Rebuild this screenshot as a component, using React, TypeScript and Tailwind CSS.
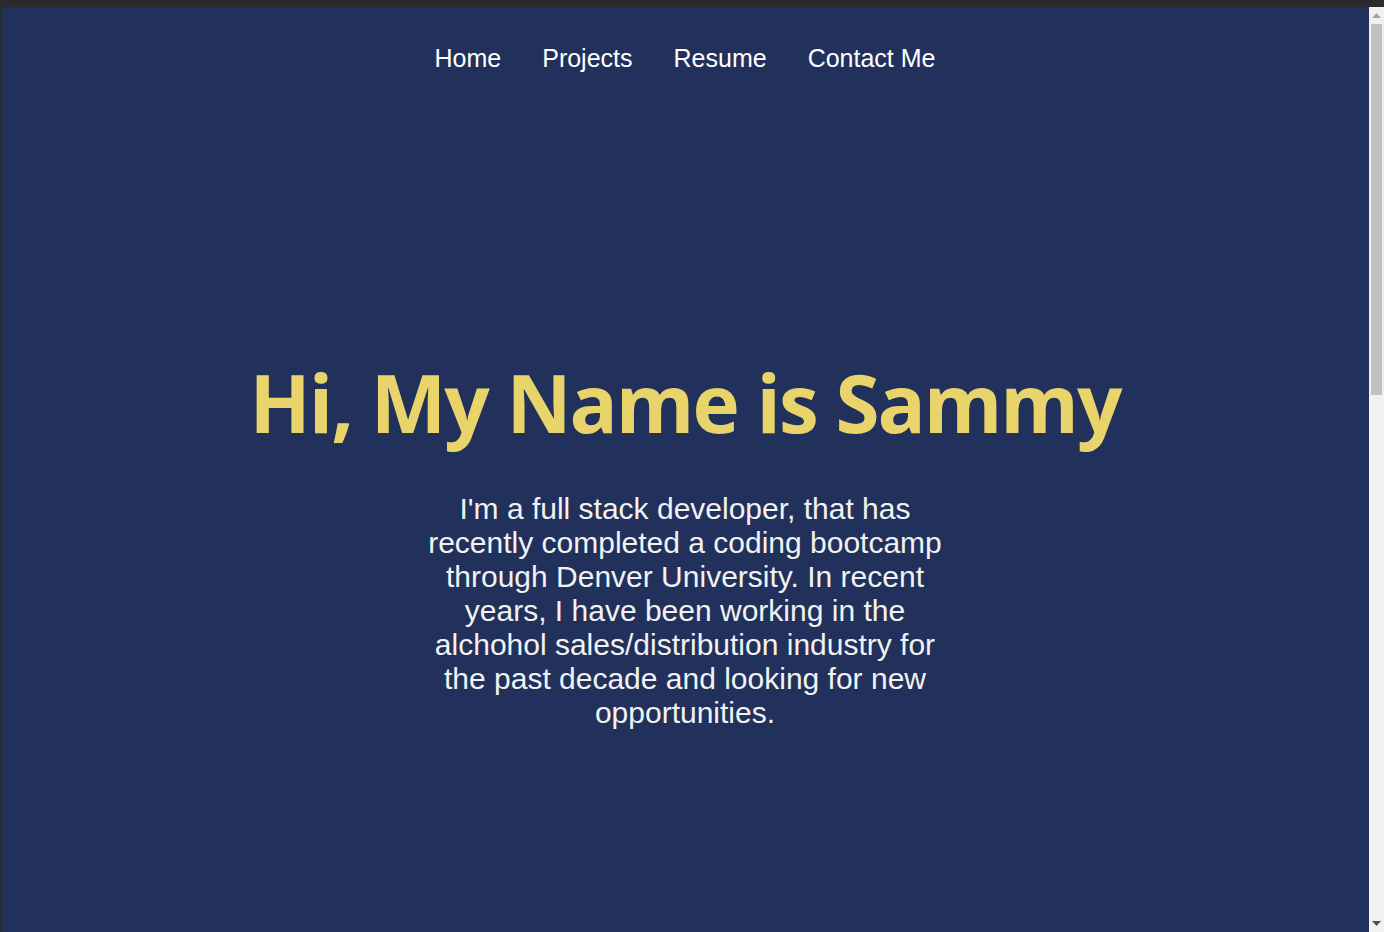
import React from 'react';

const links = ['Home', 'Projects', 'Resume', 'Contact Me'];

function Scrollbar() {
  return (
    <div className="flex w-[15px] shrink-0 flex-col bg-[#f1f1f1]">
      <div className="flex h-[17px] items-center justify-center">
        <svg width="9" height="5" viewBox="0 0 9 5">
          <path d="M0 5 L4.5 0 L9 5 Z" fill="#a3a3a3" />
        </svg>
      </div>
      <div className="mx-[2px] h-[371px] bg-[#c1c1c1]" />
      <div className="flex-1" />
      <div className="flex h-[17px] items-center justify-center">
        <svg width="9" height="5" viewBox="0 0 9 5">
          <path d="M0 0 L9 0 L4.5 5 Z" fill="#505050" />
        </svg>
      </div>
    </div>
  );
}

export default function App() {
  return (
    <div className="flex h-screen flex-col overflow-hidden bg-[#2a2a2a]">
      <div className="h-[7px] shrink-0 bg-[#2b2b2b]" />
      <div className="flex min-h-0 flex-1">
        <main className="flex flex-1 flex-col items-center border-l border-[#2b2b2b] bg-[#21315b] font-['Liberation_Sans',Arial,sans-serif]">
          <nav className="flex justify-center gap-[41px] pt-[37px] text-[25px] text-white">
            {links.map((l) => (
              <a key={l} href="#" className="leading-[28px]">
                {l}
              </a>
            ))}
          </nav>

          <section className="mt-[290px] flex flex-col items-center text-center">
            <h1 className="font-['Open_Sans',sans-serif] text-[80px] font-bold leading-none tracking-[-2px] text-[#e9d46b]">
              Hi, My Name is Sammy
            </h1>
            <p className="mt-[50px] w-[530px] text-[30px] leading-[34px] text-[#f2f2f2]">
              I'm a full stack developer, that has recently completed a coding
              bootcamp through Denver University. In recent years, I have been
              working in the alchohol sales/distribution industry for the past
              decade and looking for new opportunities.
            </p>
          </section>
        </main>
        <Scrollbar />
      </div>
    </div>
  );
}
